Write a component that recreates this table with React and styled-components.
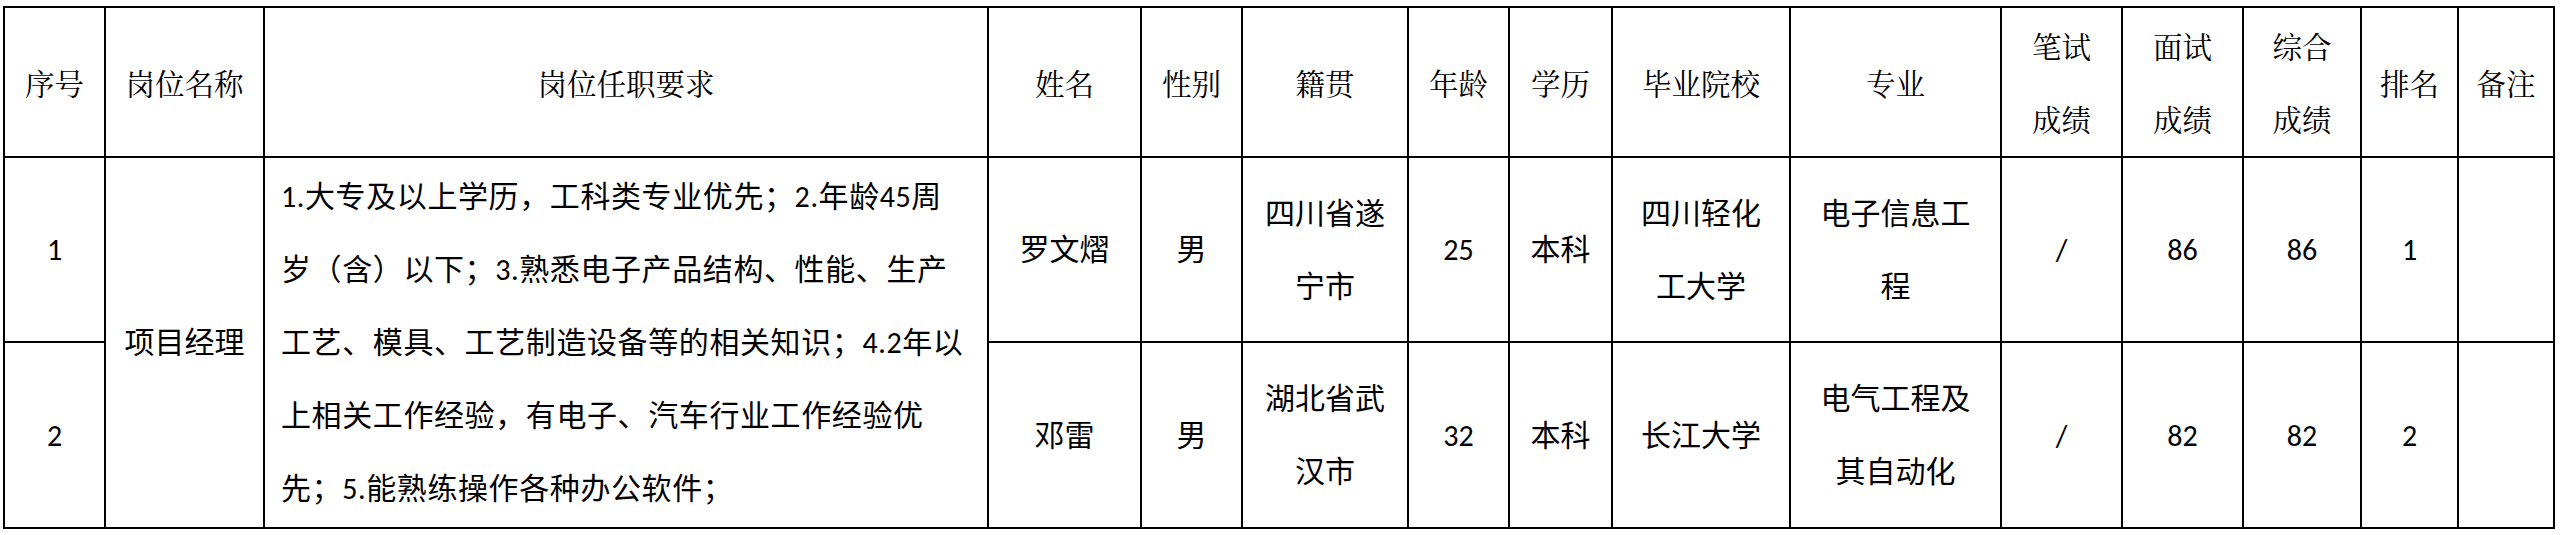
import React from 'react';
import styled, { createGlobalStyle } from 'styled-components';

const Global = createGlobalStyle`
  html, body { margin: 0; padding: 0; background: #fff; }
  body {
    font-family: Carlito, Lato, "Noto Sans CJK SC", sans-serif;
    color: #000;
  }
`;

const Page = styled.div`
  padding: 6px 0 0 3px;
`;

const Grid = styled.div`
  display: inline-grid;
  grid-template-columns: 99px 157px 722px 151px 99px 164px 99px 101px 176px 209px 119px 119px 116px 95px 94px;
  grid-template-rows: 148px 183px 184px;
  gap: 2px;
  padding: 2px;
  background: #000;
`;

const Cell = styled.div`
  background: #fff;
  display: flex;
  flex-direction: column;
  align-items: center;
  justify-content: center;
  font-size: 30px;
  line-height: 73px;
  text-align: center;
  grid-row: ${(p) => (p.$rows ? `span ${p.$rows}` : 'auto')};
`;

const HeadCell = styled(Cell)`
  font-family: "Noto Serif CJK SC", "Noto Sans CJK SC", serif;
  font-size: 29.5px;
`;

const TextCell = styled(Cell)`
  align-items: flex-start;
  text-align: left;
  padding-left: 16px;
  letter-spacing: 0.6px;
`;

const Line = styled.span`
  display: block;
  white-space: nowrap;
`;

const heads = [
  ['序号'],
  ['岗位名称'],
  ['岗位任职要求'],
  ['姓名'],
  ['性别'],
  ['籍贯'],
  ['年龄'],
  ['学历'],
  ['毕业院校'],
  ['专业'],
  ['笔试', '成绩'],
  ['面试', '成绩'],
  ['综合', '成绩'],
  ['排名'],
  ['备注'],
];

const requirement = [
  '1.大专及以上学历，工科类专业优先；2.年龄45周',
  '岁（含）以下；3.熟悉电子产品结构、性能、生产',
  '工艺、模具、工艺制造设备等的相关知识；4.2年以',
  '上相关工作经验，有电子、汽车行业工作经验优',
  '先；5.能熟练操作各种办公软件；',
];

const people = [
  {
    no: '1',
    name: ['罗文熠'],
    sex: ['男'],
    origin: ['四川省遂', '宁市'],
    age: ['25'],
    edu: ['本科'],
    school: ['四川轻化', '工大学'],
    major: ['电子信息工', '程'],
    written: ['/'],
    interview: ['86'],
    total: ['86'],
    rank: ['1'],
    note: [],
  },
  {
    no: '2',
    name: ['邓雷'],
    sex: ['男'],
    origin: ['湖北省武', '汉市'],
    age: ['32'],
    edu: ['本科'],
    school: ['长江大学'],
    major: ['电气工程及', '其自动化'],
    written: ['/'],
    interview: ['82'],
    total: ['82'],
    rank: ['2'],
    note: [],
  },
];

const Lines = ({ lines }) => lines.map((l, i) => <Line key={i}>{l}</Line>);

const fields = ['name', 'sex', 'origin', 'age', 'edu', 'school', 'major', 'written', 'interview', 'total', 'rank', 'note'];

export default function App() {
  return (
    <>
      <Global />
      <Page>
        <Grid>
          {heads.map((h, i) => (
            <HeadCell key={`h${i}`}>
              <Lines lines={h} />
            </HeadCell>
          ))}
          {people.map((p, idx) => (
            <React.Fragment key={p.no}>
              <Cell>{p.no}</Cell>
              {idx === 0 && (
                <>
                  <Cell $rows={2}>项目经理</Cell>
                  <TextCell $rows={2}>
                    <Lines lines={requirement} />
                  </TextCell>
                </>
              )}
              {fields.map((f) => (
                <Cell key={f}>
                  <Lines lines={p[f]} />
                </Cell>
              ))}
            </React.Fragment>
          ))}
        </Grid>
      </Page>
    </>
  );
}
